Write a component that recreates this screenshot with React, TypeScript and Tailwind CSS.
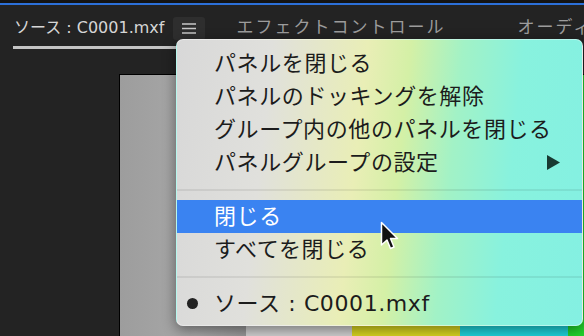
import React from 'react';

const menuFont = { fontFamily: '"DejaVu Sans", "Noto Sans CJK JP", sans-serif' };

const Cursor: React.FC = () => (
  <svg width="19" height="31" viewBox="0 0 19 31" className="absolute left-[380px] top-[221px]">
    <path
      d="M1.5 1.5 L1.5 24 L7 19 L10.5 27.5 L14 26 L10.5 17.5 L17.5 17.5 Z"
      fill="#111"
      stroke="#fff"
      strokeWidth="1.5"
      strokeLinejoin="round"
    />
  </svg>
);

const Item: React.FC<{ label: string; active?: boolean; arrow?: boolean; bullet?: boolean }> = ({
  label,
  active,
  arrow,
  bullet,
}) => (
  <div
    className={`relative flex items-center h-[33px] pl-[37px] pr-[20px] text-[22px] leading-none tracking-[0.6px] ${
      active ? 'bg-[#3a83f1] text-white' : 'text-[#1c1c1c]'
    }`}
  >
    {bullet && <span className="absolute left-[10px] w-[11px] h-[11px] rounded-full bg-[#222]" />}
    <span className="whitespace-nowrap">{label}</span>
    {arrow && (
      <svg width="15" height="15" viewBox="0 0 15 15" className="ml-auto mr-[1px]">
        <path d="M1 0 L14 7.5 L1 15 Z" fill="#183a32" />
      </svg>
    )}
  </div>
);

const Separator: React.FC = () => (
  <div className="flex items-center h-[21px]">
    <div className="w-full h-[2px] bg-black/[0.07]" />
  </div>
);

export default function App() {
  return (
    <div className="relative w-[584px] h-[336px] overflow-hidden bg-[#232323]" style={menuFont}>
      {/* top strip */}
      <div className="h-[3px] bg-[#141414]" />
      <div className="h-[2px] bg-[#2c70d9]" />

      {/* tab bar */}
      <div className="flex h-[46px] text-[17px] whitespace-nowrap">
        <div className="flex flex-col pl-[13px] shrink-0">
          <div className="flex flex-1 items-center pt-[5px]">
            <span className="pl-[1px] text-[16px] text-[#d6d6d6]">ソース : C0001.mxf</span>
            <div className="ml-[9px] flex items-center justify-center w-[32px] h-[23px] rounded-[3px] bg-[#2e2e2e]">
              <svg width="14" height="11" viewBox="0 0 14 11">
                <path d="M0 1 H14 M0 5.5 H14 M0 10 H14" stroke="#c8c8c8" strokeWidth="1.6" />
              </svg>
            </div>
          </div>
          <div className="h-[3px] mb-[2px] bg-[#c4c4c4]" />
        </div>
        <div className="flex items-center pt-[5px] pb-[5px] ml-[31px] shrink-0 text-[#9c9c9c] tracking-[2px]">
          エフェクトコントロール
        </div>
        <div className="flex items-center pt-[5px] pb-[5px] ml-[72px] shrink-0 text-[#9c9c9c] tracking-[2px]">
          オーディオ
        </div>
      </div>

      {/* program frame */}
      <div className="ml-[119px] mt-[23px] flex h-[300px] border-l border-t border-black">
        <div className="w-[126px] shrink-0 bg-[linear-gradient(90deg,#9d9d9d,#a8a8a8_60%,#999)]" />
        <div className="w-[106px] shrink-0 bg-[#d3d3d3]" />
        <div className="w-[108px] shrink-0 bg-[#dcd821]" />
        <div className="w-[108px] shrink-0 bg-[#1fd6de]" />
        <div className="w-[108px] shrink-0 bg-[#22d52c]" />
      </div>

      {/* context menu */}
      <div className="absolute left-[176px] top-[39px] w-[407px] h-[287px] pt-[7px] rounded-[7px] overflow-hidden border border-white/40 shadow-[0_4px_14px_rgba(0,0,0,0.45)] bg-[linear-gradient(96deg,#d8d8d8_0%,#e0e0dc_22%,#e9eeb6_44%,#d4f0a6_54%,#a2f2c6_66%,#88f2de_80%,#84f0e2_100%)]">
        <Item label="パネルを閉じる" />
        <Item label="パネルのドッキングを解除" />
        <Item label="グループ内の他のパネルを閉じる" />
        <Item label="パネルグループの設定" arrow />
        <Separator />
        <Item label="閉じる" active />
        <Item label="すべてを閉じる" />
        <Separator />
        <Item label="ソース : C0001.mxf" bullet />
      </div>

      <Cursor />
    </div>
  );
}
